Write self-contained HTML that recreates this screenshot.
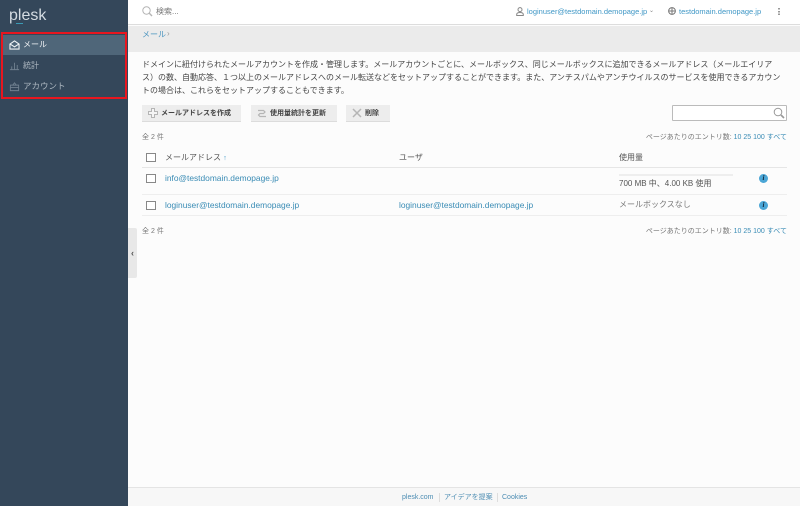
<!DOCTYPE html>
<html lang="ja"><head><meta charset="utf-8"><title>Plesk</title>
<style>
*{box-sizing:border-box}
html,body{margin:0;padding:0;width:800px;height:506px;overflow:hidden;background:#fcfcfc}
body{font-family:"Liberation Sans","Noto Sans CJK JP",sans-serif;font-size:8px;color:#444;position:relative}
.a{position:absolute;white-space:nowrap;line-height:12px}
a{color:#3a8cb5;text-decoration:none}
.btn{position:absolute;top:105px;height:17px;background:#ededed;border-bottom:1px solid #dcdcdc;font-size:7px;font-weight:bold;color:#444;line-height:17px;white-space:nowrap}
.cb{position:absolute;left:146px;width:10px;height:9px;border:1px solid #888;background:#fff}
.hr{position:absolute;left:142px;width:645px;height:1px;background:#eee}
.info{position:absolute;left:759px;width:9px;height:9px;border-radius:50%;background:#4ba6d6;color:#123;font:italic bold 7px/9px "Liberation Serif",serif;text-align:center}
svg{position:absolute;overflow:visible}
</style></head><body>
<div style="position:absolute;left:0;top:0;width:128px;height:506px;background:#34475a"></div>
<div class="a" style="left:9px;top:5px;font-size:16px;line-height:22px;color:#d5dce2">plesk</div>
<div style="position:absolute;left:16px;top:23px;width:7px;height:1px;background:#3b9ab5"></div>
<div style="position:absolute;left:3px;top:35px;width:122px;height:20px;background:#4f6679"></div>
<svg style="left:9px;top:40px" width="11" height="10" viewBox="0 0 12 11" fill="none" stroke="#f0f3f5" stroke-width="1.2"><path d="M1 4.5 6 1 11 4.5V10H1Z"/><path d="M1.2 4.5 6 7.5 10.8 4.5"/></svg>
<div class="a" style="left:23px;top:39px;font-size:8px;color:#f2f4f6">メール</div>
<svg style="left:9px;top:60px" width="11" height="11" viewBox="0 0 12 12" fill="none" stroke="#6f808f"><path d="M1 10.5H11M3 10V7M6 10V3M9 10V5.5"/></svg>
<div class="a" style="left:23px;top:60px;font-size:8px;color:#aeb8c1">統計</div>
<svg style="left:9px;top:81px" width="11" height="11" viewBox="0 0 12 12" fill="none" stroke="#6f808f"><path d="M1.5 4.5H10.5V10.5H1.5ZM4 4.5 6 2 8 4.5M1.5 7H10.5"/></svg>
<div class="a" style="left:23px;top:80px;font-size:8.5px;color:#aeb8c1">アカウント</div>
<div style="position:absolute;left:1px;top:32px;width:126px;height:67px;border:2px solid #e8161f"></div>

<div style="position:absolute;left:128px;top:0;width:672px;height:25px;background:#fff;border-bottom:1px solid #ddd"></div>
<svg style="left:142px;top:6px" width="11" height="11" viewBox="0 0 11 11" fill="none" stroke="#b5b5b5"><circle cx="4.5" cy="4.5" r="3.7"/><path d="M7.3 7.3 10 10" stroke-width="1.4"/></svg>
<div class="a" style="left:156px;top:6px;color:#777">検索...</div>
<svg style="left:516px;top:7px" width="8" height="9" viewBox="0 0 8 9" fill="none" stroke="#888"><circle cx="4" cy="2.6" r="2"/><path d="M.7 8.5V7.5C.7 6 2 5.5 4 5.5S7.3 6 7.3 7.5V8.5Z"/></svg>
<a class="a" style="left:527px;top:5.500px;color:#3f97c6;font-size:7.5px">loginuser@testdomain.demopage.jp</a>
<div class="a" style="left:649px;top:5px;font-size:6px;color:#888">⌄</div>
<svg style="left:668px;top:7px" width="8" height="8" viewBox="0 0 8 8" fill="#fff" stroke="#777"><circle cx="4" cy="4" r="3.4"/><path d="M.6 4H7.4M4 .6V7.4"/></svg>
<a class="a" style="left:679px;top:5.500px;color:#3f97c6;font-size:7.5px">testdomain.demopage.jp</a>
<div style="position:absolute;left:778px;top:8px;width:2px;height:7px;background:repeating-linear-gradient(#999 0 1.5px,#fff 1.5px 2.8px)"></div>

<div style="position:absolute;left:128px;top:26px;width:672px;height:26px;background:#ebebeb"></div>
<a class="a" style="left:142px;top:28.500px;color:#4a94bf">メール</a>
<div class="a" style="left:167px;top:28px;color:#999">›</div>

<div class="a" style="left:142px;top:58px;line-height:13px;color:#444;font-size:8px">ドメインに紐付けられたメールアカウントを作成・管理します。メールアカウントごとに、メールボックス、同じメールボックスに追加できるメールアドレス（メールエイリア<br>ス）の数、自動応答、１つ以上のメールアドレスへのメール転送などをセットアップすることができます。また、アンチスパムやアンチウイルスのサービスを使用できるアカウン<br>トの場合は、これらをセットアップすることもできます。</div>

<div class="btn" style="left:142px;width:99px;padding-left:19px">メールアドレスを作成</div>
<svg style="left:148px;top:108px" width="10" height="10" viewBox="0 0 10 10" fill="#f5f5f5" stroke="#b5b5b5"><path d="M3.500.5H6.500V3.500H9.500V6.500H6.500V9.500H3.500V6.500H.5V3.500H3.500Z"/></svg>
<div class="btn" style="left:251px;width:86px;padding-left:19px">使用量統計を更新</div>
<svg style="left:257px;top:108px" width="10" height="10" viewBox="0 0 10 10" fill="none" stroke="#b5b5b5" stroke-width="1.2"><path d="M1 2.500H6.500L8 4 6.500 5.500H3L1.500 7 3 8.500H9"/></svg>
<div class="btn" style="left:346px;width:44px;padding-left:19px">削除</div>
<svg style="left:352px;top:108px" width="10" height="10" viewBox="0 0 10 10" fill="none" stroke="#b5b5b5" stroke-width="1.5"><path d="M1 1 9 9M9 1 1 9"/></svg>

<div style="position:absolute;left:672px;top:105px;width:115px;height:16px;background:#fff;border:1px solid #bbb;border-radius:1px"></div>
<svg style="left:773px;top:107px" width="12" height="12" viewBox="0 0 12 12" fill="none" stroke="#999"><circle cx="5" cy="5" r="3.8"/><path d="M8 8 11 11" stroke-width="1.6"/></svg>

<div class="a" style="left:142px;top:131.500px;font-size:7px;color:#777">全 2 件</div>
<div class="a" style="right:13px;top:131.500px;font-size:7px;color:#777">ページあたりのエントリ数: <a>10</a> <a>25</a> <a>100</a> <a>すべて</a></div>

<div class="cb" style="top:153px"></div>
<div class="a" style="left:165px;top:151.500px;font-size:8px;color:#555">メールアドレス <span style="color:#3f97c6;font-size:7px">↑</span></div>
<div class="a" style="left:399px;top:151.500px;color:#555">ユーザ</div>
<div class="a" style="left:619px;top:151.500px;color:#555">使用量</div>
<div class="hr" style="top:167px;background:#e6e6e6"></div>

<div class="cb" style="top:174px"></div>
<a class="a" style="left:165px;top:172px;font-size:8.400px">info@testdomain.demopage.jp</a>
<div style="position:absolute;left:619px;top:174px;width:114px;height:2px;background:#eee"></div>
<div class="a" style="left:619px;top:178px;color:#555;font-size:8px">700 MB 中、4.00 KB 使用</div>
<div class="info" style="top:174px">i</div>
<div class="hr" style="top:194px"></div>

<div class="cb" style="top:201px"></div>
<a class="a" style="left:165px;top:199px;font-size:8.400px">loginuser@testdomain.demopage.jp</a>
<a class="a" style="left:399px;top:199px;font-size:8.400px">loginuser@testdomain.demopage.jp</a>
<div class="a" style="left:619px;top:199px;font-size:8px;color:#777">メールボックスなし</div>
<div class="info" style="top:201px">i</div>
<div class="hr" style="top:215px"></div>

<div class="a" style="left:142px;top:225.500px;font-size:7px;color:#777">全 2 件</div>
<div class="a" style="right:13px;top:225.500px;font-size:7px;color:#777">ページあたりのエントリ数: <a>10</a> <a>25</a> <a>100</a> <a>すべて</a></div>

<div style="position:absolute;left:128px;top:228px;width:9px;height:50px;background:#e8e8e8;border-radius:0 2px 2px 0"></div>
<div class="a" style="left:131px;top:247px;font-size:9px;font-weight:bold;color:#555">‹</div>

<div style="position:absolute;left:128px;top:487px;width:672px;height:19px;background:#f7f7f7;border-top:1px solid #e4e4e4"></div>
<a class="a" style="left:402px;top:492px;font-size:7px;color:#4d8db3">plesk.com</a>
<div style="position:absolute;left:439px;top:493px;width:1px;height:9px;background:#ddd"></div>
<a class="a" style="left:444px;top:492px;font-size:7px;color:#4d8db3">アイデアを提案</a>
<div style="position:absolute;left:497px;top:493px;width:1px;height:9px;background:#ddd"></div>
<a class="a" style="left:502px;top:492px;font-size:7px;color:#4d8db3">Cookies</a>
</body></html>
